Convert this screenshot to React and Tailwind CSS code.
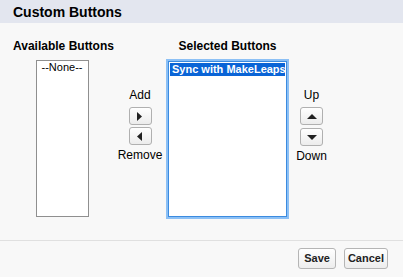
import React from 'react';

const ArrowButton = ({ dir }) => {
  const pts = {
    right: '2,0 7,4.5 2,9',
    left: '7,0 2,4.5 7,9',
    up: '0,7 5,2 10,7',
    down: '0,2 5,7 10,2',
  }[dir];
  return (
    <button className="w-[23px] h-[18px] rounded-[3px] border border-[#b0b0b0] bg-gradient-to-b from-white to-[#ececec] flex items-center justify-center">
      <svg width="10" height="9" viewBox="0 0 10 9">
        <polygon points={pts} fill="#222" />
      </svg>
    </button>
  );
};

const App = () => {
  return (
    <div className="w-[403px] h-[277px] bg-[#f8f8f8] flex flex-col font-['Liberation_Sans',Arial,sans-serif] text-black">
      {/* Header */}
      <div className="h-[23px] bg-[#e3e6ef] flex items-center pl-[13px]">
        <h2 className="text-[14px] font-bold leading-none">Custom Buttons</h2>
      </div>

      {/* Body */}
      <div className="h-[217px] flex pl-[13px] pt-[16px]">
        {/* Available */}
        <div className="w-[101px] flex flex-col items-center">
          <div className="text-[12px] font-bold leading-[14px] whitespace-nowrap">Available Buttons</div>
          <div className="mt-[7px] ml-[-3px] w-[53px] h-[157px] border border-[#8f8f8f] bg-white">
            <div className="text-[11px] leading-[13px] text-center">--None--</div>
          </div>
        </div>

        {/* Add / Remove */}
        <div className="w-[52px] flex flex-col items-center pt-[49px]">
          <div className="text-[12px] leading-[14px] mb-[5px]">Add</div>
          <ArrowButton dir="right" />
          <div className="h-[2px]" />
          <ArrowButton dir="left" />
          <div className="text-[12px] leading-[14px] mt-[3px]">Remove</div>
        </div>

        {/* Selected */}
        <div className="w-[123px] flex flex-col items-center">
          <div className="text-[12px] font-bold leading-[14px] whitespace-nowrap">Selected Buttons</div>
          <div className="mt-[8px] w-[119px] h-[156px] border border-[#3b8be0] bg-white shadow-[0_0_0_2px_#8cc0f5] p-px">
            <div className="bg-[#0a64d6] text-white text-[11px] font-bold leading-[13px] pl-[2px] whitespace-nowrap">
              Sync with MakeLeaps
            </div>
          </div>
        </div>

        {/* Up / Down */}
        <div className="w-[45px] flex flex-col items-center pt-[49px]">
          <div className="text-[12px] leading-[14px] mb-[5px]">Up</div>
          <ArrowButton dir="up" />
          <div className="h-[3px]" />
          <ArrowButton dir="down" />
          <div className="text-[12px] leading-[14px] mt-[3px]">Down</div>
        </div>
      </div>

      {/* Footer */}
      <div className="flex-1 border-t border-[#e0e0e0] flex justify-end items-start pt-[7px] pr-[15px] gap-[8px]">
        <button className="h-[21px] px-[5px] rounded-[3px] border border-[#b5b5b5] bg-gradient-to-b from-white to-[#ededed] text-[11px] font-bold text-[#222]">
          Save
        </button>
        <button className="h-[21px] px-[3px] rounded-[3px] border border-[#b5b5b5] bg-gradient-to-b from-white to-[#ededed] text-[11px] font-bold text-[#222]">
          Cancel
        </button>
      </div>
    </div>
  );
};

export default App;
